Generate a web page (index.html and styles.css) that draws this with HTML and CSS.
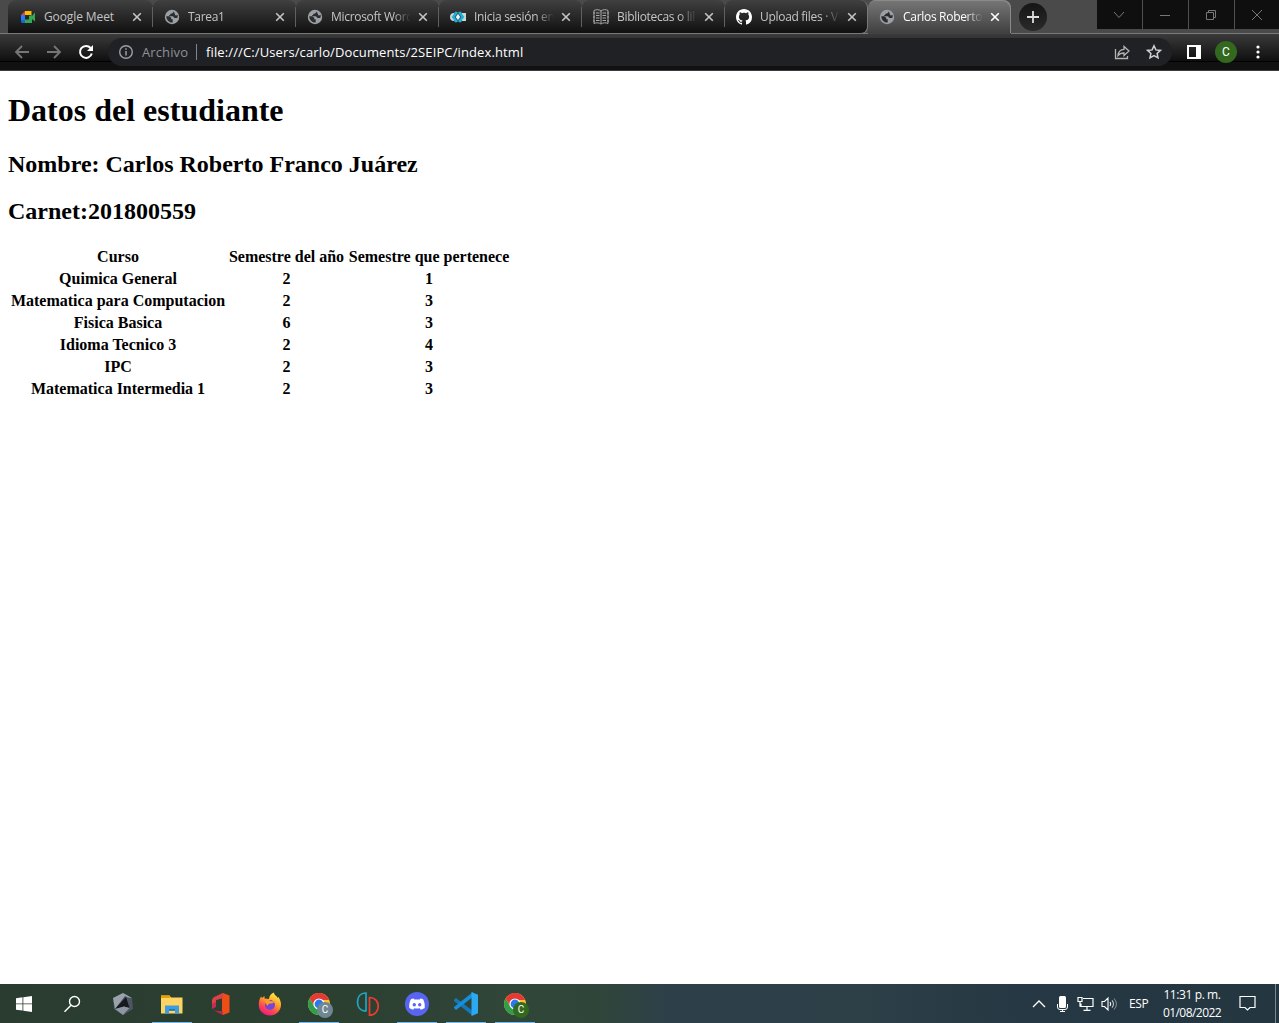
FILE: index.html
```html
<!DOCTYPE html>
<html lang="es">
<head>
<meta charset="utf-8">
<title>Carlos Roberto</title>
<link rel="stylesheet" href="styles.css">
</head>
<body>
<svg class="defs" width="0" height="0">
  <defs>
    <symbol id="globe" viewBox="0 0 16 16"><circle cx="8" cy="8" r="7.200" fill="#9aa0a6"/><path d="M2.300 7.200H5l2.200 1.600v1.400h1.500v3.400C5 13.600 2.300 10.800 2.300 7.200zM9.500 2.500c-.2 1.500-.9 2-2.900 2.200-.2 1.300-.8 1.400-1.600 1.600v1h3.700c1 .2 1 1.600 2.300 1.600h2.300c.5-1.200.5-1.900.2-3.100-.8.900-2.400 1-2.400-.1 0-1-.6-.8-.6-1.500 0-.8-.4-1.400-1-1.700z" fill="#2b2c2d"/></symbol>
    <symbol id="close" viewBox="0 0 10 10"><path d="m1.200 1.200 7.600 7.600m0-7.600L1.200 8.800" fill="none" stroke="currentColor" stroke-width="1.600"/></symbol>
    <symbol id="chrome" viewBox="0 0 24 24"><circle cx="12" cy="12" r="11" fill="#fbc02d"/><path d="M2.500 6.500A11 11 0 0 1 21.500 6.500L22 8H12L7.500 14z" fill="#e53935"/><path d="M2.500 6.500A11 11 0 0 0 12 23l5-8.500L12 17l-4.700-2.500z" fill="#2e9e4b"/><circle cx="12" cy="12" r="5.600" fill="#fff"/><circle cx="12" cy="12" r="4.400" fill="#2979e8"/></symbol>
  </defs>
</svg>

<header class="browser">
  <div class="tab-strip">
    <div class="tabs">
      <div class="tab">
        <svg class="favicon meet" viewBox="0 0 16 16"><path d="M1 6 5 2v4z" fill="#ea4335"/><path d="M5 2h6.500v4H5z" fill="#fbbc04"/><path d="M1 6h4v5H1z" fill="#2979ff"/><path d="M1 11h4v3H2l-1-1z" fill="#1967d2"/><path d="M5 10.500h4V7l3-1v8H5zM12 7l3-3.500v9L12 10z" fill="#34a853"/></svg>
        <span class="tab-title">Google Meet</span><svg class="tab-close"><use href="#close"/></svg>
      </div>
      <div class="tab"><svg class="favicon"><use href="#globe"/></svg><span class="tab-title">Tarea1</span><svg class="tab-close"><use href="#close"/></svg></div>
      <div class="tab"><svg class="favicon"><use href="#globe"/></svg><span class="tab-title">Microsoft Word</span><svg class="tab-close"><use href="#close"/></svg></div>
      <div class="tab">
        <svg class="favicon" viewBox="0 0 16 16"><path d="M0 8q0-4 4-4h3v8H4q-4 0-4-4zM9 4h7v8H9z" fill="#c9d6da"/><path d="M4 3h8v10H4z" fill="#435e67"/><path d="M6.800 3 3 8l3.800 5M9.200 3 13 8l-3.800 5" fill="none" stroke="#19b6df" stroke-width="2.200"/><path d="m8 5 2.200 3L8 11 5.800 8z" fill="#e5faff"/></svg>
        <span class="tab-title">Inicia sesión en</span><svg class="tab-close"><use href="#close"/></svg>
      </div>
      <div class="tab">
        <svg class="favicon" viewBox="0 0 16 16" fill="none" stroke="#aaa"><path d="M8 1.500v13M8 2C6 .3 3 .3 1 1.500v13c2-1 5-1 7 .5 2-1.500 5-1.500 7-.5v-13C13 .3 10 .3 8 2z"/><path d="M3 4h3.500M3 6.500h3.500M3 9h3.500M3 11.500h3.500M9.500 4H13M9.500 6.500H13M9.500 9H13M9.500 11.500H13M0 4h2M0 8h2M0 12h2M14 4h2M14 8h2M14 12h2"/></svg>
        <span class="tab-title">Bibliotecas o lil</span><svg class="tab-close"><use href="#close"/></svg>
      </div>
      <div class="tab">
        <svg class="favicon" viewBox="0 0 16 16"><path fill="#fff" d="M8 0C3.580 0 0 3.580 0 8c0 3.540 2.290 6.530 5.470 7.590.4.070.55-.17.55-.38 0-.19-.01-.82-.01-1.490-2.010.37-2.530-.49-2.690-.94-.09-.23-.48-.94-.82-1.130-.28-.15-.68-.52-.01-.53.63-.01 1.080.58 1.230.82.72 1.210 1.870.87 2.330.66.070-.52.280-.87.510-1.070-1.780-.2-3.640-.89-3.640-3.950 0-.87.31-1.590.82-2.150-.08-.2-.36-1.020.08-2.120 0 0 .67-.21 2.200.82.64-.18 1.320-.27 2-.27s1.360.09 2 .27c1.530-1.040 2.200-.82 2.200-.82.44 1.100.16 1.920.08 2.120.51.560.82 1.270.82 2.150 0 3.070-1.870 3.750-3.650 3.950.29.25.54.73.54 1.480 0 1.070-.01 1.930-.01 2.200 0 .21.15.46.55.38A8 8 0 0 0 16 8c0-4.420-3.580-8-8-8z"/></svg>
        <span class="tab-title">Upload files · V</span><svg class="tab-close"><use href="#close"/></svg>
      </div>
      <div class="tab active"><svg class="favicon"><use href="#globe"/></svg><span class="tab-title">Carlos Roberto</span><svg class="tab-close"><use href="#close"/></svg></div>
    </div>
    <div class="new-tab"><svg width="12" height="12" viewBox="0 0 12 12"><path d="M6 0v12M0 6h12" stroke="#ddd" stroke-width="1.800"/></svg></div>
    <div class="window-controls">
      <div><svg width="12" height="12" viewBox="0 0 12 12"><path d="m1 3 5 5.500L11 3"/></svg></div>
      <div><svg width="12" height="12" viewBox="0 0 12 12"><path d="M1 6.500h10"/></svg></div>
      <div><svg width="12" height="12" viewBox="0 0 12 12"><path d="M1.500 3.500h7v7h-7zM3.500 3.500v-2h7v7h-2"/></svg></div>
      <div><svg width="12" height="12" viewBox="0 0 12 12"><path d="m1 1 10 10M11 1 1 11"/></svg></div>
    </div>
  </div>
  <div class="toolbar">
    <svg class="nav" viewBox="0 0 16 16"><path d="M15 8H2m6-6L2 8l6 6" stroke="#767676"/></svg>
    <svg class="nav" viewBox="0 0 16 16"><path d="M1 8h13M8 2l6 6-6 6" stroke="#767676"/></svg>
    <svg class="nav reload" viewBox="0 0 16 16"><path d="M12.600 4A6 6 0 1 0 13.800 9.500" stroke="#fff" stroke-width="2"/><path d="M15 1v6H9z" fill="#fff"/></svg>
    <div class="address">
      <svg width="16" height="16" viewBox="0 0 16 16"><circle cx="8" cy="8" r="6.300" fill="none" stroke="#9aa0a6" stroke-width="1.400"/><path d="M8 7v4.500M8 4.300v1.500" stroke="#9aa0a6" stroke-width="1.500"/></svg>
      <span class="scheme">Archivo</span>
      <span class="url">file:///C:/Users/carlo/Documents/2SEIPC/index.html</span>
      <svg class="share" width="16" height="16" viewBox="0 0 16 16" fill="none" stroke="#b5b5b5" stroke-width="1.300"><path d="M1.500 5v9.500h12V12"/><path d="M4 11.500C4.300 7.500 6.500 5.500 10 5.300V2.500l5 4.600-5 4.400V9C7.300 9 5.500 9.600 4 11.500z"/></svg>
      <svg class="star" width="16" height="16" viewBox="0 0 16 16"><path d="m8 1.800 1.900 4.100 4.500.5-3.300 3 .9 4.500-4-2.300-4 2.300.9-4.500-3.300-3 4.500-.5z" fill="none" stroke="#d0d0d0" stroke-width="1.500"/></svg>
    </div>
    <svg class="panel" width="14" height="14" viewBox="0 0 14 14"><path fill="#fff" fill-rule="evenodd" d="M0 0h14v14H0zM2 2v10h7V2z"/></svg>
    <span class="avatar">C</span>
    <svg class="more" width="4" height="14" viewBox="0 0 4 14" fill="#fff"><circle cx="2" cy="2" r="1.600"/><circle cx="2" cy="7" r="1.600"/><circle cx="2" cy="12" r="1.600"/></svg>
  </div>
</header>

<main class="page">
  <h1>Datos del estudiante</h1>
  <h2>Nombre: Carlos Roberto Franco Juárez</h2>
  <h2>Carnet:201800559</h2>
  <table>
    <colgroup><col class="col-course"><col class="col-term"><col class="col-level"></colgroup>
    <tr><th>Curso</th><th>Semestre del año</th><th>Semestre que pertenece</th></tr>
    <tr><th>Quimica General</th><th>2</th><th>1</th></tr>
    <tr><th>Matematica para Computacion</th><th>2</th><th>3</th></tr>
    <tr><th>Fisica Basica</th><th>6</th><th>3</th></tr>
    <tr><th>Idioma Tecnico 3</th><th>2</th><th>4</th></tr>
    <tr><th>IPC</th><th>2</th><th>3</th></tr>
    <tr><th>Matematica Intermedia 1</th><th>2</th><th>3</th></tr>
  </table>
</main>

<footer class="taskbar">
  <div class="task start"><svg width="16" height="16" viewBox="0 0 16 16"><path fill="#fff" d="M0 2.200 6.500 1.300v6.200H0zM7.300 1.200 16 0v7.500H7.300zM0 8.300h6.500v6.300L0 13.700zM7.300 8.300H16V16l-8.700-1.200z"/></svg></div>
  <div class="task search"><svg width="18" height="18" viewBox="0 0 18 18"><circle cx="11.500" cy="6.500" r="5" fill="none" stroke="#fff" stroke-width="1.400"/><path d="m8 10.300-6.500 6.500" stroke="#fff" stroke-width="1.500"/></svg></div>
  <div class="task"><svg width="24" height="24" viewBox="0 0 24 24"><path d="m12 1 9 5 1 11-10 6-9-6-1-11z" fill="#4d555f"/><path d="m12 1 9 5-4-.5L14 4 4 17 2 6z" fill="#9aa2ac"/><path d="m15 5 3.500 11-5.500-1.500L4 17z" fill="#17191e"/><path d="m4 17 9-2.500 5.500 1.500L12 23z" fill="#8d96a1"/></svg></div>
  <div class="task open"><svg width="24" height="24" viewBox="0 0 24 24"><path d="M1 3.500h8.500l1.500 2h11.500v16H1z" fill="#ffd361"/><path d="M1 3.500h8.500L10 6H1z" fill="#e6a100"/><path d="M5 13.500h14v8h-4V18H9v3.500H5z" fill="#3d9be0"/><path d="M9 17h6v1.800H9z" fill="#1d72b8"/></svg></div>
  <div class="task"><svg width="24" height="24" viewBox="0 0 24 24"><path d="M14 1 4 5.500 3 8v9l4-2V8l7-2z" fill="#c32d52"/><path d="m14 1 6.500 2.500v17L14 23l-1-3V4z" fill="#ee4e16"/><path d="M14 1 5 5.200 3 8v4l4-2V8l7-2z" fill="#d84343"/><path d="m3 17 3.500 1.700 7.500.8V23l-8-4z" fill="#c7264e"/></svg></div>
  <div class="task"><svg width="24" height="24" viewBox="0 0 24 24"><defs><linearGradient id="fire" x1=".8" y1="0" x2=".3" y2="1"><stop offset="0" stop-color="#fff24a"/><stop offset=".4" stop-color="#ffa52b"/><stop offset=".7" stop-color="#ff4b4c"/><stop offset="1" stop-color="#ed168b"/></linearGradient></defs><path d="M16 .5c0 3 3 3.200 3.700 5.500l.8-1c1.300 2 2.700 5 2.500 8-.4 6-5 10.500-11 10.500S.8 19 .8 13c0-3 .5-5.700 2.200-8.500l1 1.500L6.500 4v2.500L11 7c0-3 2-5.300 5-6.500z" fill="url(#fire)"/><circle cx="12" cy="13" r="5" fill="#7446d8"/><path d="M6.500 7q4-.5 6 2l4 .5q-1 2.500-4 2-3 0-2.500 2.500-3-2-3.500-7z" fill="#ff9b24"/></svg></div>
  <div class="task open badge-grey"><svg width="24" height="24"><use href="#chrome"/></svg><span class="badge">C</span></div>
  <div class="task"><svg width="24" height="24" viewBox="0 0 24 24" fill="none" stroke-width="1.700"><path d="M10 1v18C4 19 1.500 14.500 1.500 10S4 1 10 1z" stroke="#1ea6c6"/><path d="M13.500 5.500v17.800c5.700 0 8.700-4.300 8.700-9s-3-8.800-8.700-8.800z" stroke="#ef3b2d"/></svg></div>
  <div class="task open"><svg width="24" height="24" viewBox="0 0 24 24"><circle cx="12" cy="12" r="12" fill="#5865f2"/><path d="M8.500 6.500Q7 6.700 5.700 7.500C4.500 10 4 13 4.300 16q1.800 1.400 3.900 1.700l1-1.500q2.800.6 5.600 0l1 1.500q2.100-.3 3.900-1.700c.3-3-.2-6-1.400-8.500Q17 6.700 15.500 6.500l-.8 1.100q-2.700-.4-5.400 0z" fill="#fff"/><circle cx="9.300" cy="12.700" r="1.700" fill="#5865f2"/><circle cx="14.700" cy="12.700" r="1.700" fill="#5865f2"/></svg></div>
  <div class="task open"><svg width="24" height="24" viewBox="0 0 24 24"><path d="m0 8 2-2L19 19v5L0 9z" fill="#1478bd"/><path d="m0 16 2 2L19 5V0L0 15z" fill="#168fd8"/><path d="m17.500 0 6.500 2.700v18.600L17.500 24z" fill="#2ba9f2"/></svg></div>
  <div class="task open badge-green"><svg width="24" height="24"><use href="#chrome"/></svg><span class="badge">C</span></div>
  <div class="tray">
    <svg width="14" height="10" viewBox="0 0 14 10"><path d="m1 8 6-6 6 6" fill="none" stroke="#fff" stroke-width="1.300"/></svg>
    <svg class="mic" width="12" height="18" viewBox="0 0 12 18"><rect x="3" y="1" width="7" height="12" rx="1.500" fill="#fff"/><path d="M1.500 9v3q0 2.500 2.500 2.500h5q2.500 0 2.500-2.500V9M6.500 15v2M4 16.500h5" fill="none" stroke="#fff"/></svg>
    <svg class="network" width="17" height="16" viewBox="0 0 17 16" fill="none" stroke="#fff" stroke-width="1.200"><path d="M6 2.500h10v8H4v-3M10 10.500v4M6.500 14.400h7M1 1.500h4v4H1zM3 5.500v5.300"/></svg>
    <svg class="sound" width="17" height="16" viewBox="0 0 17 16" fill="none" stroke="#fff" stroke-width="1.100"><path d="M1 5.500h2.500L7 2v12l-3.500-3.500H1zM9 6q1.500 2 0 4"/><path d="M11 4.300q3 3.700 0 7.400" opacity=".7"/><path d="M13 2.500q5 5.500 0 11" opacity=".4"/></svg>
    <span class="language">ESP</span>
    <div class="clock"><span>11:31 p. m.</span><span class="date">01/08/2022</span></div>
    <svg class="notice" width="17" height="17" viewBox="0 0 17 17"><path d="M1 1.500h15v11h-5L8.500 15 6 12.500H1z" fill="none" stroke="#fff" stroke-width="1.200"/></svg>
  </div>
</footer>
</body>
</html>
```

FILE: styles.css
```css
* { box-sizing: border-box; }

body {
  margin: 0;
  width: 1279px;
  height: 1023px;
  display: flex;
  flex-direction: column;
  overflow: hidden;
  background: #fff;
  font-family: "Open Sans", "Noto Sans", sans-serif;
}

svg { display: block; flex: none; }
.defs { position: absolute; }

.browser { flex: none; height: 71px; }

.tab-strip {
  display: flex;
  height: 34px;
  padding-left: 8px;
  background: linear-gradient(#4a4a4a, #4a4a4a 33px, #797979 33px);
}

.tabs { display: flex; flex: none; height: 34px; }

.tab {
  display: flex;
  align-items: center;
  width: 143px;
  height: 34px;
  padding: 0 10px 0 11px;
  border-radius: 8px 8px 0 0;
  border-bottom: 1px solid #797979;
  background: linear-gradient(to top, transparent 6px, #606060 6px, #606060 26px, transparent 26px) right / 1px 100% no-repeat, linear-gradient(#404040, #101010);
  color: #c5c5c5;
}
.tab:first-child { width: 145px; padding-left: 13px; }
.tab:nth-child(6) {
  padding-right: 9px;
  border-right: 1px solid #797979;
  border-bottom-right-radius: 7px;
  background: linear-gradient(#404040, #101010);
}

.tab.active {
  padding-left: 11px;
  border-bottom-color: #424242;
  background: linear-gradient(#777, #404040);
  box-shadow: inset -1px 1px #8a8a8a;
  color: #fff;
}

.favicon { width: 16px; height: 16px; }
.favicon.meet { margin-left: -1px; margin-right: 1px; }
.tab-title {
  flex: none;
  width: 81px;
  margin-left: 8px;
  overflow: hidden;
  white-space: nowrap;
  font-size: 12px;
  letter-spacing: -0.3px;
  line-height: 20px;
  mask-image: linear-gradient(to right, #000 62px, transparent 80px);
}
.tab:first-child .tab-title { margin-left: 7px; letter-spacing: -0.1px; mask-image: none; }
.tab-close { width: 10px; height: 10px; margin-left: auto; margin-right: 1px; }

.new-tab {
  display: flex;
  flex: none;
  align-items: center;
  justify-content: center;
  width: 28px;
  height: 28px;
  margin: 3px 0 0 8px;
  border-radius: 50%;
  background: linear-gradient(#151515, #2a2a2a);
}

.window-controls { display: flex; gap: 1px; width: 182px; height: 29px; margin-left: auto; background: #505050; }
.window-controls div { display: flex; flex: none; align-items: center; justify-content: center; width: 45px; padding-right: 1px; background: #0f0f0f; }
.window-controls div:last-child { width: 44px; padding-right: 0; }
.window-controls path { fill: none; stroke: #777; }

.toolbar {
  display: flex;
  align-items: center;
  height: 37px;
  padding-left: 14px;
  border-bottom: 1px solid #3b3b3b;
  background: linear-gradient(#3a3a3a, #0f0f0f 27px, #000 27px, #000 28px, #111 28px);
}
.nav { width: 16px; height: 16px; margin-right: 16px; fill: none; stroke-width: 1.8; }
.reload { margin-right: 14px; }
.address {
  display: flex;
  align-items: center;
  width: 1064px;
  height: 28px;
  padding: 0 10px;
  border-radius: 14px;
  background: #202124;
  color: #fff;
  font-size: 13px;
  letter-spacing: 0.12px;
  line-height: 28px;
}
.scheme { margin-left: 8px; width: 55px; height: 16px; line-height: 16px; border-right: 1px solid #80868b; color: #8d9297; }
.url { margin-left: 9px; white-space: nowrap; }
.share { margin-left: auto; }
.star { margin-left: 16px; }
.panel { margin-left: 15px; }
.avatar {
  width: 22px;
  height: 22px;
  margin-left: 14px;
  border-radius: 50%;
  background: #33691e;
  color: #fff;
  font: 12px/22px Roboto, sans-serif;
  text-align: center;
}
.more { margin-left: 19px; }

.page {
  flex: 1;
  padding: 0 8px;
  color: #000;
  font: 16px "Liberation Serif", serif;
}
h1 { margin: 21.44px 0; font-size: 32px; line-height: 37px; }
h2 { margin: 19.92px 0; font-size: 24px; line-height: 27px; }
table { width: 505px; table-layout: fixed; border-spacing: 2px; white-space: nowrap; }
th { padding: 1px 0; font-size: 16px; line-height: 18px; }
.col-course { width: 216px; }
.col-term { width: 117px; }
.col-level { width: 164px; }

.taskbar {
  display: flex;
  flex: none;
  height: 39px;
  background:
    linear-gradient(#7a858c, #7a858c) 1275px 0 / 1px 100% no-repeat,
    linear-gradient(to right, #293c2f, #2c4032 350px, #304638 520px, #30453a 600px, #2d404a 670px, #2d4048 860px, #253843 1020px, #243640 1279px);
  color: #fff;
}
.task { position: relative; display: flex; flex: none; align-items: center; justify-content: center; width: 49px; height: 39px; }
.start, .search { width: 48px; }
.search { margin-right: 2px; }
.open { background: linear-gradient(#76b9ed, #76b9ed) 5px 38px / 40px 1px no-repeat; }
.badge {
  position: absolute;
  left: 23px;
  top: 18px;
  width: 16px;
  height: 16px;
  border-radius: 50%;
  color: #fff;
  font: 10px/16px Roboto, sans-serif;
  text-align: center;
}
.badge-grey .badge { background: #6f8793; }
.badge-green .badge { background: #33691e; }

.tray { display: flex; align-items: center; margin-left: auto; padding-right: 23px; }
.mic { margin-left: 10px; }
.network { margin-left: 9px; }
.sound { margin-left: 7px; }
.language { width: 19px; margin-left: 11px; font-size: 12px; letter-spacing: -0.4px; }
.clock { display: flex; flex-direction: column; width: 60px; margin-left: 14px; font-size: 12px; letter-spacing: -0.4px; line-height: 18px; text-align: center; white-space: nowrap; }
.date { letter-spacing: -0.55px; }
.notice { margin-left: 17px; }
```
